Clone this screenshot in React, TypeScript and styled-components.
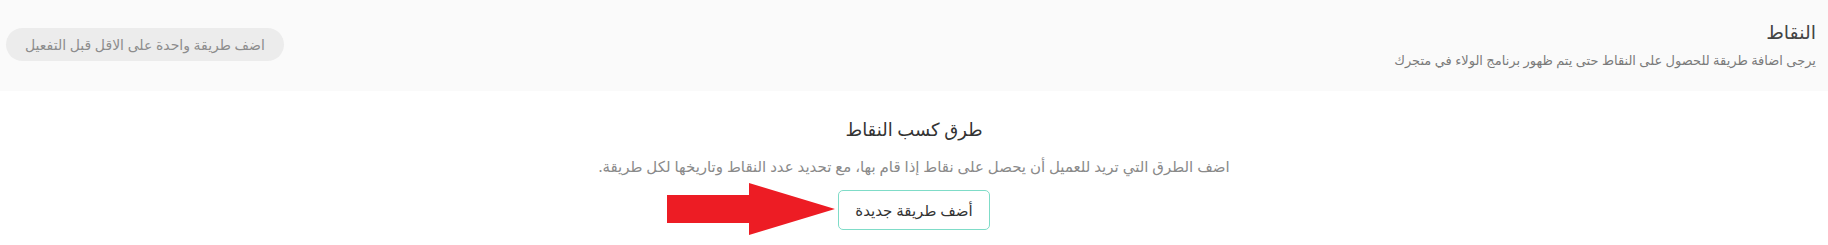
import React from "react";
import styled, { createGlobalStyle } from "styled-components";

const GlobalStyle = createGlobalStyle`
  html, body {
    margin: 0;
    padding: 0;
    background: #ffffff;
    font-family: "Noto Sans", "DejaVu Sans", sans-serif;
  }
`;

const Page = styled.div`
  direction: rtl;
  width: 1828px;
  height: 245px;
  overflow: hidden;
`;

const Header = styled.header`
  display: flex;
  align-items: flex-start;
  justify-content: space-between;
  height: 91px;
  box-sizing: border-box;
  padding: 18px 12px 0 6px;
  background: #fafafa;
`;

const HeaderText = styled.div`
  display: flex;
  flex-direction: column;
  gap: 5px;
`;

const HeaderTitle = styled.h2`
  margin: 0;
  font-size: 19px;
  font-weight: 500;
  color: #444;
  line-height: 28px;
`;

const HeaderSub = styled.p`
  margin: 0;
  font-size: 13px;
  color: #7a7a7a;
  line-height: 18px;
`;

const Badge = styled.span`
  display: inline-flex;
  align-items: center;
  margin-top: 10px;
  height: 33px;
  padding: 0 19px;
  border-radius: 17px;
  background: #ececec;
  color: #8d8d8d;
  font-size: 14px;
`;

const Empty = styled.section`
  display: flex;
  flex-direction: column;
  align-items: center;
  padding-top: 25px;
`;

const Title = styled.h3`
  margin: 0;
  font-size: 18px;
  font-weight: 500;
  color: #333;
  line-height: 27px;
`;

const Desc = styled.p`
  margin: 12px 0 0;
  font-size: 15px;
  color: #8a8a8a;
  line-height: 22px;
`;

const ButtonWrap = styled.div`
  position: relative;
  margin-top: 13px;
`;

const AddButton = styled.button`
  height: 40px;
  min-width: 148px;
  padding: 0 16px;
  white-space: nowrap;
  border: 1px solid #7fdcc8;
  border-radius: 5px;
  background: #fff;
  color: #333;
  font-family: inherit;
  font-size: 15px;
  cursor: pointer;
`;

const Arrow = styled.svg`
  position: absolute;
  right: 100%;
  top: -7px;
  margin-right: 3px;
`;

export default function App() {
  return (
    <>
      <GlobalStyle />
      <Page>
        <Header>
          <HeaderText>
            <HeaderTitle>النقاط</HeaderTitle>
            <HeaderSub>
              يرجى اضافة طريقة للحصول على النقاط حتى يتم ظهور برنامج الولاء في متجرك
            </HeaderSub>
          </HeaderText>
          <Badge>اضف طريقة واحدة على الاقل قبل التفعيل</Badge>
        </Header>
        <Empty>
          <Title>طرق كسب النقاط</Title>
          <Desc>
            اضف الطرق التي تريد للعميل أن يحصل على نقاط إذا قام بها، مع تحديد عدد النقاط وتاريخها لكل طريقة.
          </Desc>
          <ButtonWrap>
            <Arrow width="168" height="52" viewBox="0 0 168 52">
              <polygon
                points="0,12 82,12 82,0 168,26 82,52 82,40 0,40"
                fill="#ed1c24"
              />
            </Arrow>
            <AddButton>أضف طريقة جديدة</AddButton>
          </ButtonWrap>
        </Empty>
      </Page>
    </>
  );
}
